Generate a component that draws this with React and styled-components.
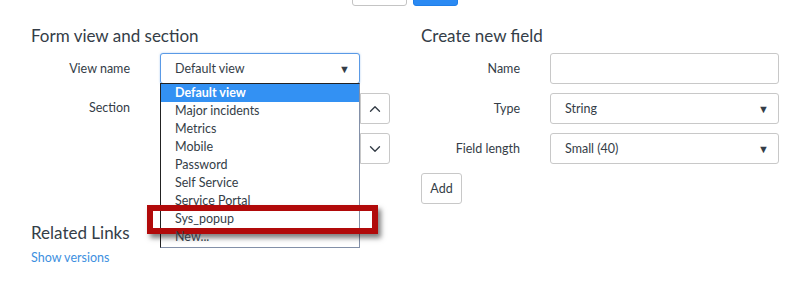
import React from 'react';
import styled, { createGlobalStyle } from 'styled-components';
import { ChevronUp, ChevronDown } from 'lucide-react';

const GlobalStyle = createGlobalStyle`
  html, body {
    margin: 0;
    padding: 0;
    background: #fff;
    font-family: "Lato", "Open Sans", sans-serif;
    color: #343d47;
  }
`;

const viewNames = [
  'Default view',
  'Major incidents',
  'Metrics',
  'Mobile',
  'Password',
  'Self Service',
  'Service Portal',
  'Sys_popup',
  'New...',
];

const App = () => {
  return (
    <>
      <GlobalStyle />
      <Page>
        <TopBar>
          <TopButton />
          <TopButton primary />
        </TopBar>
        <Columns>
          <Column>
            <Heading>Form view and section</Heading>
            <Row>
              <Label>View name</Label>
              <SelectWrap>
                <Select focused>
                  <span>Default view</span>
                  <Caret>▼</Caret>
                </Select>
                <Dropdown>
                  {viewNames.map((name, i) => (
                    <Option key={name} selected={i === 0}>
                      {name}
                      {name === 'Sys_popup' && <Highlight />}
                    </Option>
                  ))}
                </Dropdown>
              </SelectWrap>
            </Row>
            <SectionRow>
              <Label tall>Section</Label>
              <ListBox />
              <MoveButtons>
                <MoveButton><ChevronUp size={18} strokeWidth={1.8} /></MoveButton>
                <MoveButton><ChevronDown size={18} strokeWidth={1.8} /></MoveButton>
              </MoveButtons>
            </SectionRow>
            <Heading related>Related Links</Heading>
            <Link href="#">Show versions</Link>
          </Column>
          <Column>
            <Heading>Create new field</Heading>
            <Row>
              <Label>Name</Label>
              <Input />
            </Row>
            <Row>
              <Label>Type</Label>
              <Select>
                <span>String</span>
                <Caret>▼</Caret>
              </Select>
            </Row>
            <Row>
              <Label>Field length</Label>
              <Select>
                <span>Small (40)</span>
                <Caret>▼</Caret>
              </Select>
            </Row>
            <AddButton>Add</AddButton>
          </Column>
        </Columns>
      </Page>
    </>
  );
};

const Page = styled.div`
  width: 804px;
  height: 284px;
  overflow: hidden;
  position: relative;
`;

const TopBar = styled.div`
  display: flex;
  gap: 6px;
  padding-left: 352px;
  margin-top: -26px;
`;

const TopButton = styled.div`
  width: ${(p) => (p.primary ? '45px' : '55px')};
  height: 32px;
  box-sizing: border-box;
  border-radius: 3px;
  border: 1px solid ${(p) => (p.primary ? '#1f7ee8' : '#c4c4c4')};
  background: ${(p) => (p.primary ? '#2b8af3' : '#fff')};
`;

const Columns = styled.div`
  display: grid;
  grid-template-columns: 390px 390px;
  padding-left: 31px;
  margin-top: 20px;
`;

const Column = styled.div`
  display: flex;
  flex-direction: column;
`;

const Heading = styled.h2`
  margin: ${(p) => (p.related ? '59px 0 0' : '0')};
  font-size: 17px;
  font-weight: 400;
  line-height: 20px;
  height: 27px;
  color: #343d47;
`;

const Row = styled.div`
  display: flex;
  align-items: center;
  margin-bottom: 9px;
`;

const Label = styled.label`
  width: 99px;
  text-align: right;
  padding-right: 30px;
  font-size: 12.5px;
  color: #343d47;
  align-self: ${(p) => (p.tall ? 'flex-start' : 'center')};
  margin-top: ${(p) => (p.tall ? '7px' : '0')};
`;

const SelectWrap = styled.div`
  position: relative;
`;

const Select = styled.div`
  box-sizing: border-box;
  width: 229px;
  height: 31px;
  display: flex;
  align-items: center;
  justify-content: space-between;
  padding: 0 9px 0 14px;
  font-size: 12.5px;
  color: #343d47;
  background: #fff;
  border: 1px solid ${(p) => (p.focused ? '#5a9ae6' : '#c8c8c8')};
  border-radius: 3px;
  box-shadow: ${(p) => (p.focused ? '0 0 2px rgba(80,150,230,0.5)' : 'none')};
  ${SelectWrap} & {
    width: 200px;
  }
`;

const Caret = styled.span`
  font-size: 11px;
  color: #343d47;
`;

const Dropdown = styled.ul`
  position: absolute;
  top: 30px;
  left: 0;
  width: 200px;
  box-sizing: border-box;
  margin: 0;
  padding: 0 0 1px;
  list-style: none;
  background: #fff;
  border-top: 1px solid #222;
  border-left: 1px solid #222;
  border-right: 1px solid #8390a8;
  border-bottom: 1px solid #8390a8;
  z-index: 2;
`;

const Option = styled.li`
  position: relative;
  height: 18px;
  line-height: 18px;
  padding-left: 14px;
  font-size: 12.5px;
  color: ${(p) => (p.selected ? '#fff' : '#343d47')};
  font-weight: ${(p) => (p.selected ? 700 : 400)};
  background: ${(p) => (p.selected ? '#3391f3' : 'transparent')};
`;

const Highlight = styled.span`
  position: absolute;
  left: -14px;
  right: -19px;
  top: -5px;
  bottom: -6px;
  border: 6px solid #b10a0a;
  box-shadow: 3px 4px 5px rgba(0, 0, 0, 0.5);
`;

const SectionRow = styled.div`
  display: flex;
  align-items: flex-start;
`;

const ListBox = styled.div`
  width: 200px;
  height: 71px;
  box-sizing: border-box;
  border: 1px solid #c8c8c8;
`;

const MoveButtons = styled.div`
  display: flex;
  flex-direction: column;
  gap: 9px;
`;

const MoveButton = styled.div`
  width: 30px;
  height: 31px;
  box-sizing: border-box;
  border: 1px solid #c8c8c8;
  border-radius: 0 3px 3px 0;
  display: flex;
  align-items: center;
  justify-content: center;
  color: #343d47;
  background: #fff;
`;

const Input = styled.div`
  box-sizing: border-box;
  width: 229px;
  height: 31px;
  border: 1px solid #c8c8c8;
  border-radius: 3px;
`;

const AddButton = styled.button`
  width: 41px;
  height: 31px;
  box-sizing: border-box;
  border: 1px solid #c8c8c8;
  border-radius: 3px;
  background: #fff;
  font-family: inherit;
  font-size: 12.5px;
  color: #343d47;
  padding: 0;
`;

const Link = styled.a`
  font-size: 12.5px;
  color: #3d8fe0;
  text-decoration: none;
  margin-top: 0;
`;

export default App;
